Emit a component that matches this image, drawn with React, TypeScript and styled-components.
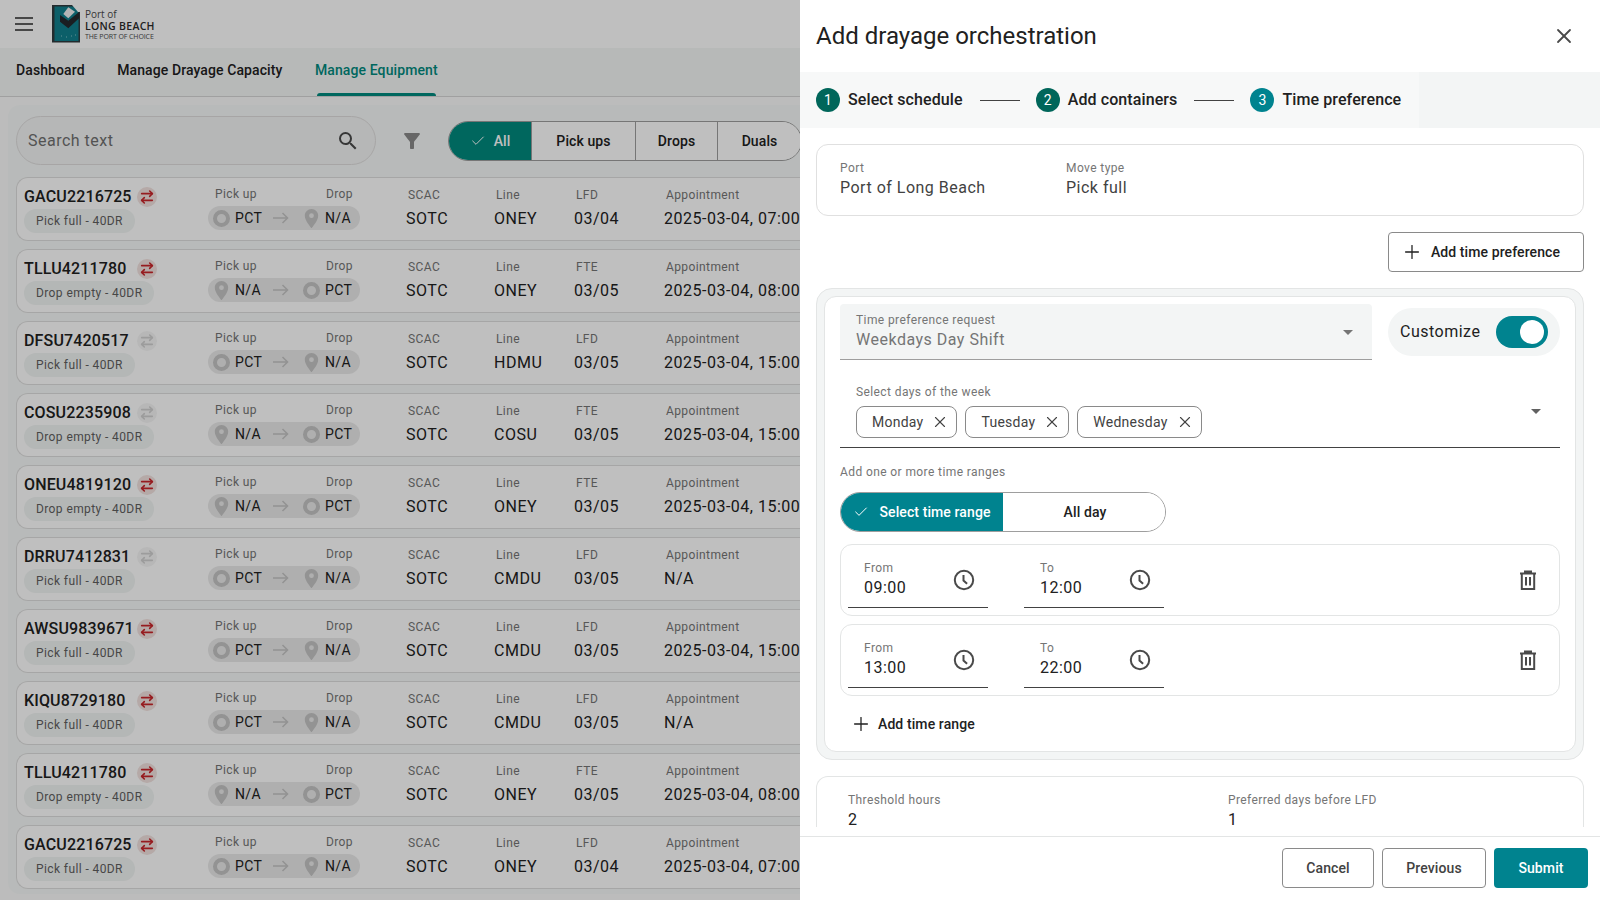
import React from "react";
import styled, { createGlobalStyle } from "styled-components";
import { ArrowRightLeft, Check, Plus, X } from "lucide-react";
import { MdFilterAlt, MdPlace, MdSearch } from "react-icons/md";

const Global = createGlobalStyle`
  html, body { margin: 0; padding: 0; background: #fff; }
  body { font-family: Roboto, "Liberation Sans", sans-serif; color: #212121; overflow: hidden; }
  * { box-sizing: border-box; }
`;

const Page = styled.div`
  display: flex;
  width: 1600px;
  height: 900px;
  overflow: hidden;
`;
const Backdrop = styled.div`
  position: relative;
  width: 800px;
  height: 900px;
  overflow: hidden;
  background: #fbfbfb;
`;
const Scrim = styled.div`
  position: absolute;
  inset: 0;
  background: rgba(0, 0, 0, 0.25);
`;
const Content = styled.div`
  width: 900px;
`;
const TopBar = styled.header`
  display: flex;
  align-items: center;
  height: 48px;
  background: #fff;
  padding-left: 15px;
`;
const Burger = styled.div`
  display: flex;
  flex-direction: column;
  gap: 4px;
  width: 18px;
  margin-right: 19px;
  span { display: block; height: 2px; background: #5f5f5f; }
`;
const LogoText = styled.div`
  display: flex;
  flex-direction: column;
  margin-left: 4px;
  color: #4a4a4a;
  font-family: "Open Sans", sans-serif;
  line-height: 1;
`;
const LogoSmall = styled.span`
  font-size: 10px;
  line-height: 12px;
`;
const LogoBig = styled.span`
  font-size: 10.5px;
  font-weight: 600;
  line-height: 12px;
  color: #2b2b2b;
  letter-spacing: 0.3px;
`;
const LogoTag = styled.span`
  font-size: 7px;
  line-height: 9px;
  letter-spacing: -0.1px;
`;
const Tabs = styled.nav`
  display: flex;
  height: 49px;
  padding-left: 16px;
  gap: 32.5px;
  background: #f5f7f6;
  border-bottom: 1px solid #d6d6d6;
`;
const Tab = styled.div<{ $on?: boolean }>`
  position: relative;
  font-size: 14px;
  font-weight: 500;
  line-height: 45px;
  letter-spacing: 0.1px;
  color: ${(p) => (p.$on ? "#008a7e" : "#212121")};
  ${(p) =>
    p.$on &&
    `&::after { content: ""; position: absolute; left: 2px; right: 2px; bottom: 0; height: 3px; border-radius: 3px 3px 0 0; background: #008a7e; }`}
`;
const Main = styled.main`
  padding: 8px 0 0 8px;
`;
const Panel = styled.section`
  background: #f6f9f8;
  border-radius: 12px 0 0 12px;
  padding: 11px 0 5px 8px;
`;
const Toolbar = styled.div`
  display: flex;
  align-items: center;
  height: 49px;
  margin-bottom: 12px;
`;
const Search = styled.div`
  display: flex;
  align-items: center;
  justify-content: space-between;
  width: 360px;
  height: 49px;
  padding: 0 15px 0 11px;
  border: 1px solid #dfdddd;
  border-radius: 25px;
  background: #f3f5f5;
  color: #6f6f6f;
  font-size: 16px;
  letter-spacing: 0.5px;
`;
const FilterWrap = styled.div`
  display: flex;
  margin: 0 24px;
  color: #8a8a8a;
`;
const Segs = styled.div`
  display: flex;
  height: 40px;
  border: 1px solid #9e9e9e;
  border-radius: 20px;
  overflow: hidden;
`;
const Seg = styled.div<{ $w: number; $on?: boolean }>`
  display: flex;
  align-items: center;
  justify-content: center;
  gap: 8px;
  width: ${(p) => p.$w}px;
  font-size: 14px;
  font-weight: 500;
  letter-spacing: 0.1px;
  color: ${(p) => (p.$on ? "#fff" : "#212121")};
  background: ${(p) => (p.$on ? "#008a7e" : "#fff")};
  & + & { border-left: 1px solid #9e9e9e; }
`;
const Rows = styled.div`
  display: flex;
  flex-direction: column;
  gap: 8px;
`;
const Row = styled.article`
  display: grid;
  grid-template-columns: 184px 198px 88px 80px 90px 1fr;
  height: 64px;
  padding: 8px 0 0 7px;
  background: #fff;
  border: 1px solid #dedede;
  border-right: 0;
  border-radius: 12px 0 0 12px;
`;
const IdCol = styled.div`
  margin-top: 1px;
`;
const IdLine = styled.div`
  display: flex;
  align-items: center;
  height: 20px;
`;
const IdText = styled.span`
  width: 113px;
  padding-bottom: 2px;
  font-size: 16px;
  font-weight: 500;
  letter-spacing: 0.15px;
`;
const Swap = styled.span<{ $on?: boolean }>`
  display: inline-flex;
  align-items: center;
  justify-content: center;
  width: 20px;
  height: 20px;
  border-radius: 50%;
  background: ${(p) => (p.$on ? "#f2e2df" : "#f5f5f5")};
  color: ${(p) => (p.$on ? "#c9262b" : "#d0d0d0")};
`;
const MoveChip = styled.div`
  display: inline-flex;
  align-items: center;
  height: 24px;
  margin-top: 2px;
  padding: 0 12px;
  border-radius: 12px;
  background: #f1f4f3;
  color: #5f5f5f;
  font-size: 12px;
  letter-spacing: 0.4px;
`;
const RouteCol = styled.div`
  display: flex;
  flex-direction: column;
  align-items: flex-start;
`;
const RouteLabels = styled.div`
  display: grid;
  grid-template-columns: 111px auto;
  padding-left: 7px;
  height: 16px;
  margin-bottom: 4px;
`;
const Small = styled.div`
  font-size: 12px;
  line-height: 16px;
  letter-spacing: 0.4px;
  color: #757575;
`;
const RoutePill = styled.div`
  display: grid;
  grid-template-columns: 60px 30px 1fr;
  align-items: center;
  width: 152px;
  height: 24px;
  padding-left: 5px;
  border-radius: 12px;
  background: #eaeaea;
  color: #c4c4c4;
`;
const Stop = styled.div`
  display: flex;
  align-items: center;
  gap: 5px;
  font-size: 14px;
  letter-spacing: 0.35px;
  color: #212121;
`;
const Ring = styled.span`
  display: inline-block;
  width: 17px;
  height: 17px;
  border: 4px solid #c4c4c4;
  border-radius: 50%;
`;
const PinBox = styled.span`
  display: inline-flex;
  justify-content: center;
  width: 17px;
  color: #c4c4c4;
  svg { flex: none; margin: 0 -3px; }
`;
const DataCol = styled.div`
  margin-top: 1px;
`;
const DataLabel = styled(Small)`
  padding-left: 2px;
`;
const Value = styled.div`
  margin-top: 4px;
  font-size: 16px;
  line-height: 24px;
  letter-spacing: 0.5px;
  white-space: nowrap;
  color: #212121;
`;

const Drawer = styled.aside`
  display: flex;
  flex-direction: column;
  width: 800px;
  height: 900px;
  background: #fff;
`;
const DrawerHead = styled.div`
  display: flex;
  align-items: center;
  justify-content: space-between;
  flex: 0 0 72px;
  padding: 0 24px 0 16px;
`;
const Title = styled.h1`
  margin: 0;
  font-size: 24px;
  font-weight: 400;
  line-height: 32px;
  color: #212121;
`;
const CloseBtn = styled.div`
  display: flex;
  color: #4a4a4a;
`;
const StepBand = styled.div`
  display: flex;
  flex: 0 0 56px;
  background: #f3f5f5;
`;
const Steps = styled.div`
  display: flex;
  align-items: center;
  padding: 0 16px;
  width: 619px;
  background: #f7f8f8;
`;
const StepDot = styled.span<{ $c: string }>`
  display: inline-flex;
  align-items: center;
  justify-content: center;
  width: 24px;
  height: 24px;
  margin-right: 8px;
  border-radius: 50%;
  background: ${(p) => p.$c};
  color: #fff;
  font-size: 14px;
`;
const StepLabel = styled.span`
  padding-bottom: 2px;
  font-size: 16px;
  font-weight: 500;
  letter-spacing: 0.1px;
  color: #212121;
`;
const StepLine = styled.span`
  width: 40px;
  height: 1px;
  margin: 0 16px 0 17px;
  background: #424242;
`;
const Body = styled.div`
  flex: 1;
  min-height: 0;
  margin-bottom: 10px;
  padding: 16px 16px 0;
  display: flex;
  flex-direction: column;
`;
const InfoCard = styled.div`
  display: flex;
  flex: 0 0 72px;
  padding: 15px 23px 0;
  border: 1px solid #e0e0e0;
  border-radius: 12px;
`;
const InfoCol = styled.div<{ $w: number }>`
  width: ${(p) => p.$w}px;
`;
const InfoValue = styled.div`
  font-size: 16px;
  line-height: 24px;
  letter-spacing: 0.5px;
  color: #424242;
`;
const ActionRow = styled.div`
  display: flex;
  justify-content: flex-end;
  flex: 0 0 auto;
  margin: 16px 0;
`;
const OutlineBtn = styled.div<{ $w: number }>`
  display: flex;
  align-items: center;
  justify-content: center;
  gap: 8px;
  width: ${(p) => p.$w}px;
  height: 40px;
  border: 1px solid #8a8a8a;
  border-radius: 4px;
  font-size: 14px;
  font-weight: 500;
  letter-spacing: 0.1px;
  color: #212121;
`;
const AddPrefBtn = styled(OutlineBtn)`
  padding-right: 11px;
`;
const Group = styled.div`
  flex: 0 0 472px;
  padding: 7px;
  background: #f3f5f5;
  border: 1px solid #e3e5e5;
  border-radius: 16px;
`;
const GroupInner = styled.div`
  height: 456px;
  padding: 7px 15px;
  background: #fff;
  border: 1px solid #e3e5e5;
  border-radius: 12px;
`;
const TopLine = styled.div`
  display: flex;
  align-items: center;
  gap: 16px;
`;
const SelectBox = styled.div`
  position: relative;
  width: 532px;
  height: 56px;
  padding: 8px 16px;
  background: #f3f5f5;
  border-bottom: 1px solid #9e9e9e;
  border-radius: 4px 4px 0 0;
`;
const Caret = styled.span`
  position: absolute;
  right: 19px;
  top: 26px;
  width: 0;
  height: 0;
  border-left: 5px solid transparent;
  border-right: 5px solid transparent;
  border-top: 5px solid #757575;
`;
const SelectValue = styled.div`
  font-size: 16px;
  line-height: 24px;
  letter-spacing: 0.5px;
  color: #757575;
`;
const CustomizePill = styled.div`
  display: flex;
  align-items: center;
  justify-content: space-between;
  width: 172px;
  height: 48px;
  padding: 0 12px;
  border-radius: 24px;
  background: #f3f5f5;
  font-size: 16px;
  letter-spacing: 0.5px;
`;
const CustomizeText = styled.span`
  padding-bottom: 2px;
`;
const Switch = styled.div`
  display: flex;
  justify-content: flex-end;
  align-items: center;
  width: 52px;
  height: 32px;
  padding-right: 4px;
  border-radius: 16px;
  background: #00838f;
  span { width: 24px; height: 24px; border-radius: 50%; background: #fff; }
`;
const DaysField = styled.div`
  position: relative;
  height: 72px;
  margin-top: 16px;
  padding: 8px 16px 0;
  border-bottom: 1px solid #424242;
`;
const ChipRow = styled.div`
  display: flex;
  gap: 8px;
  margin-top: 6px;
`;
const DayChip = styled.div`
  display: flex;
  align-items: center;
  gap: 8px;
  height: 32px;
  padding: 0 7px 0 15px;
  border: 1px solid #8a8a8a;
  border-radius: 8px;
  font-size: 14px;
  letter-spacing: 0.25px;
  color: #424242;
`;
const DaysCaret = styled(Caret)`
  top: 33px;
  right: 19px;
  border-top-color: #616161;
`;
const RangeTitle = styled(Small)`
  margin-top: 16px;
`;
const RangeToggle = styled.div`
  display: flex;
  width: 326px;
  height: 40px;
  margin-top: 12px;
  border: 1px solid #9e9e9e;
  border-radius: 20px;
  overflow: hidden;
`;
const RangeOption = styled.div<{ $on?: boolean }>`
  display: flex;
  align-items: center;
  justify-content: center;
  gap: 10px;
  flex: ${(p) => (p.$on ? "0 0 163px" : "1")};
  margin: ${(p) => (p.$on ? "-1px 0 -1px -1px" : "0")};
  padding-left: ${(p) => (p.$on ? "1px" : "2px")};
  font-size: 14px;
  font-weight: 500;
  letter-spacing: 0.1px;
  color: ${(p) => (p.$on ? "#fff" : "#212121")};
  background: ${(p) => (p.$on ? "#00838f" : "#fff")};
`;
const TimeCards = styled.div`
  display: flex;
  flex-direction: column;
  gap: 8px;
  margin-top: 12px;
`;
const TimeCard = styled.div`
  display: flex;
  align-items: center;
  gap: 36px;
  height: 72px;
  padding: 7px 19px 7px 7px;
  border: 1px solid #e3e5e5;
  border-radius: 12px;
`;
const TimeField = styled.div`
  display: flex;
  align-items: center;
  justify-content: space-between;
  width: 140px;
  height: 56px;
  padding: 0 12px 0 16px;
  border-bottom: 1px solid #424242;
  color: #4a4a4a;
`;
const TimeValue = styled.div`
  font-size: 16px;
  line-height: 24px;
  letter-spacing: 0.5px;
  color: #212121;
`;
const TrashBtn = styled.div`
  display: flex;
  margin-left: auto;
  color: #4a4a4a;
`;
const AddRange = styled.div`
  display: flex;
  align-items: center;
  gap: 6px;
  height: 40px;
  margin-top: 8px;
  padding-left: 10px;
  font-size: 14px;
  font-weight: 500;
  letter-spacing: 0.1px;
`;
const ThresholdCard = styled.div`
  display: grid;
  grid-template-columns: 380px 1fr;
  flex: 0 0 39px;
  margin-top: 16px;
  padding: 15px 31px 0;
  border: 1px solid #e3e5e5;
  border-bottom: 0;
  border-radius: 12px 12px 0 0;
`;
const ThresholdValue = styled.div`
  margin-top: 5px;
  font-size: 16px;
  line-height: 14px;
  letter-spacing: 0.5px;
  color: #212121;
`;
const Footer = styled.footer`
  display: flex;
  align-items: center;
  justify-content: flex-end;
  gap: 8px;
  flex: 0 0 64px;
  padding: 0 12px 2px 0;
  border-top: 1px solid #e3e5e5;
`;
const FootBtn = styled(OutlineBtn)`
  color: #424242;
`;
const PrimaryBtn = styled.div`
  display: flex;
  align-items: center;
  justify-content: center;
  width: 94px;
  height: 40px;
  border-radius: 4px;
  background: #00838f;
  color: #fff;
  font-size: 14px;
  font-weight: 500;
  letter-spacing: 0.1px;
`;

const LogoMark = () => (
  <svg width="29" height="38" viewBox="0 0 29 38" style={{ flex: "none" }}>
    <rect x="0" y="0" width="28" height="37.5" fill="#2f3a3e" />
    <rect x="2.5" y="1.5" width="24" height="34.5" fill="#117f8c" />
    <path d="M20 0h9v7h-3z" fill="#fff" />
    <path d="M16.3 2.3L23 6.7l-6.7 6.6-5-4.3z" fill="#f2f2f2" />
    <path d="M8 10l8.3 5.7 11-9V13L16.3 23.3 8 16.7z" fill="#23292c" />
    <path d="M9 31h1M14 32h1M19 31h1M23 30h1" stroke="#9fd3d8" strokeWidth="0.8" />
  </svg>
);
const ClockIcon = () => (
  <svg width="24" height="24" viewBox="0 0 24 24" fill="none" stroke="currentColor" strokeWidth="2">
    <circle cx="12" cy="12" r="9.2" />
    <path d="M11.5 7v5.6l3.6 3.2" />
  </svg>
);
const TrashIcon = () => (
  <svg width="24" height="24" viewBox="0 0 24 24" fill="none" stroke="currentColor" strokeWidth="2">
    <path d="M4 5.5h16M9 5.5V3.6h6v1.9M5.8 5.5v15.4h12.4V5.5M10 9v8.5M14 9v8.5" />
  </svg>
);
const RouteArrow = () => (
  <svg width="16" height="12" viewBox="0 0 16 12" fill="none" stroke="currentColor" strokeWidth="1.6">
    <path d="M0 6h14.5M9.5 1l5 5-5 5" />
  </svg>
);
const Pin = () => (
  <PinBox>
    <MdPlace size={23} />
  </PinBox>
);

type Rec = {
  id: string;
  red: boolean;
  drop: boolean;
  line: string;
  dateLabel: string;
  date: string;
  appt: string;
};
const A = "2025-03-04, ";
const rows: Rec[] = [
  { id: "GACU2216725", red: true, drop: false, line: "ONEY", dateLabel: "LFD", date: "03/04", appt: A + "07:00" },
  { id: "TLLU4211780", red: true, drop: true, line: "ONEY", dateLabel: "FTE", date: "03/05", appt: A + "08:00" },
  { id: "DFSU7420517", red: false, drop: false, line: "HDMU", dateLabel: "LFD", date: "03/05", appt: A + "15:00" },
  { id: "COSU2235908", red: false, drop: true, line: "COSU", dateLabel: "FTE", date: "03/05", appt: A + "15:00" },
  { id: "ONEU4819120", red: true, drop: true, line: "ONEY", dateLabel: "FTE", date: "03/05", appt: A + "15:00" },
  { id: "DRRU7412831", red: false, drop: false, line: "CMDU", dateLabel: "LFD", date: "03/05", appt: "N/A" },
  { id: "AWSU9839671", red: true, drop: false, line: "CMDU", dateLabel: "LFD", date: "03/05", appt: A + "15:00" },
  { id: "KIQU8729180", red: true, drop: false, line: "CMDU", dateLabel: "LFD", date: "03/05", appt: "N/A" },
  { id: "TLLU4211780", red: true, drop: true, line: "ONEY", dateLabel: "FTE", date: "03/05", appt: A + "08:00" },
  { id: "GACU2216725", red: true, drop: false, line: "ONEY", dateLabel: "LFD", date: "03/04", appt: A + "07:00" },
];

const DataCell = ({ label, value }: { label: string; value: string }) => (
  <DataCol>
    <DataLabel>{label}</DataLabel>
    <Value>{value}</Value>
  </DataCol>
);

const TimeRange = ({ from, to }: { from: string; to: string }) => (
  <TimeCard>
    <TimeField>
      <div>
        <Small>From</Small>
        <TimeValue>{from}</TimeValue>
      </div>
      <ClockIcon />
    </TimeField>
    <TimeField>
      <div>
        <Small>To</Small>
        <TimeValue>{to}</TimeValue>
      </div>
      <ClockIcon />
    </TimeField>
    <TrashBtn>
      <TrashIcon />
    </TrashBtn>
  </TimeCard>
);

export default function App() {
  return (
    <Page>
      <Global />
      <Backdrop>
        <Content>
          <TopBar>
            <Burger>
              <span />
              <span />
              <span />
            </Burger>
            <LogoMark />
            <LogoText>
              <LogoSmall>Port of</LogoSmall>
              <LogoBig>LONG BEACH</LogoBig>
              <LogoTag>THE PORT OF CHOICE</LogoTag>
            </LogoText>
          </TopBar>
          <Tabs>
            <Tab>Dashboard</Tab>
            <Tab>Manage Drayage Capacity</Tab>
            <Tab $on>Manage Equipment</Tab>
          </Tabs>
          <Main>
            <Panel>
              <Toolbar>
                <Search>
                  <span>Search text</span>
                  <MdSearch size={24} color="#4a4a4a" />
                </Search>
                <FilterWrap>
                  <MdFilterAlt size={24} />
                </FilterWrap>
                <Segs>
                  <Seg $w={82} $on>
                    <Check size={16} strokeWidth={1.5} />
                    All
                  </Seg>
                  <Seg $w={104}>Pick ups</Seg>
                  <Seg $w={82}>Drops</Seg>
                  <Seg $w={84}>Duals</Seg>
                </Segs>
              </Toolbar>
              <Rows>
                {rows.map((r, i) => (
                  <Row key={i}>
                    <IdCol>
                      <IdLine>
                        <IdText>{r.id}</IdText>
                        <Swap $on={r.red}>
                          <ArrowRightLeft size={16} strokeWidth={2.4} />
                        </Swap>
                      </IdLine>
                      <MoveChip>{r.drop ? "Drop empty - 40DR" : "Pick full - 40DR"}</MoveChip>
                    </IdCol>
                    <RouteCol>
                      <RouteLabels>
                        <Small>Pick up</Small>
                        <Small>Drop</Small>
                      </RouteLabels>
                      <RoutePill>
                        <Stop>
                          {r.drop ? <Pin /> : <Ring />}
                          {r.drop ? "N/A" : "PCT"}
                        </Stop>
                        <RouteArrow />
                        <Stop>
                          {r.drop ? <Ring /> : <Pin />}
                          {r.drop ? "PCT" : "N/A"}
                        </Stop>
                      </RoutePill>
                    </RouteCol>
                    <DataCell label="SCAC" value="SOTC" />
                    <DataCell label="Line" value={r.line} />
                    <DataCell label={r.dateLabel} value={r.date} />
                    <DataCell label="Appointment" value={r.appt} />
                  </Row>
                ))}
              </Rows>
            </Panel>
          </Main>
        </Content>
        <Scrim />
      </Backdrop>
      <Drawer>
        <DrawerHead>
          <Title>Add drayage orchestration</Title>
          <CloseBtn>
            <X size={24} strokeWidth={1.8} />
          </CloseBtn>
        </DrawerHead>
        <StepBand>
          <Steps>
            <StepDot $c="#00665a">1</StepDot>
            <StepLabel>Select schedule</StepLabel>
            <StepLine />
            <StepDot $c="#00665a">2</StepDot>
            <StepLabel>Add containers</StepLabel>
            <StepLine />
            <StepDot $c="#00838f">3</StepDot>
            <StepLabel>Time preference</StepLabel>
          </Steps>
        </StepBand>
        <Body>
          <InfoCard>
            <InfoCol $w={226}>
              <Small>Port</Small>
              <InfoValue>Port of Long Beach</InfoValue>
            </InfoCol>
            <InfoCol $w={200}>
              <Small>Move type</Small>
              <InfoValue>Pick full</InfoValue>
            </InfoCol>
          </InfoCard>
          <ActionRow>
            <AddPrefBtn $w={196}>
              <Plus size={22} strokeWidth={1.4} />
              Add time preference
            </AddPrefBtn>
          </ActionRow>
          <Group>
            <GroupInner>
              <TopLine>
                <SelectBox>
                  <Small>Time preference request</Small>
                  <SelectValue>Weekdays Day Shift</SelectValue>
                  <Caret />
                </SelectBox>
                <CustomizePill>
                  <CustomizeText>Customize</CustomizeText>
                  <Switch>
                    <span />
                  </Switch>
                </CustomizePill>
              </TopLine>
              <DaysField>
                <Small>Select days of the week</Small>
                <ChipRow>
                  {["Monday", "Tuesday", "Wednesday"].map((d) => (
                    <DayChip key={d}>
                      {d}
                      <X size={18} strokeWidth={1.5} />
                    </DayChip>
                  ))}
                </ChipRow>
                <DaysCaret />
              </DaysField>
              <RangeTitle>Add one or more time ranges</RangeTitle>
              <RangeToggle>
                <RangeOption $on>
                  <Check size={16} strokeWidth={1.5} />
                  Select time range
                </RangeOption>
                <RangeOption>All day</RangeOption>
              </RangeToggle>
              <TimeCards>
                <TimeRange from="09:00" to="12:00" />
                <TimeRange from="13:00" to="22:00" />
              </TimeCards>
              <AddRange>
                <Plus size={22} strokeWidth={1.4} />
                Add time range
              </AddRange>
            </GroupInner>
          </Group>
          <ThresholdCard>
            <div>
              <Small>Threshold hours</Small>
              <ThresholdValue>2</ThresholdValue>
            </div>
            <div>
              <Small>Preferred days before LFD</Small>
              <ThresholdValue>1</ThresholdValue>
            </div>
          </ThresholdCard>
        </Body>
        <Footer>
          <FootBtn $w={92}>Cancel</FootBtn>
          <FootBtn $w={104}>Previous</FootBtn>
          <PrimaryBtn>Submit</PrimaryBtn>
        </Footer>
      </Drawer>
    </Page>
  );
}
